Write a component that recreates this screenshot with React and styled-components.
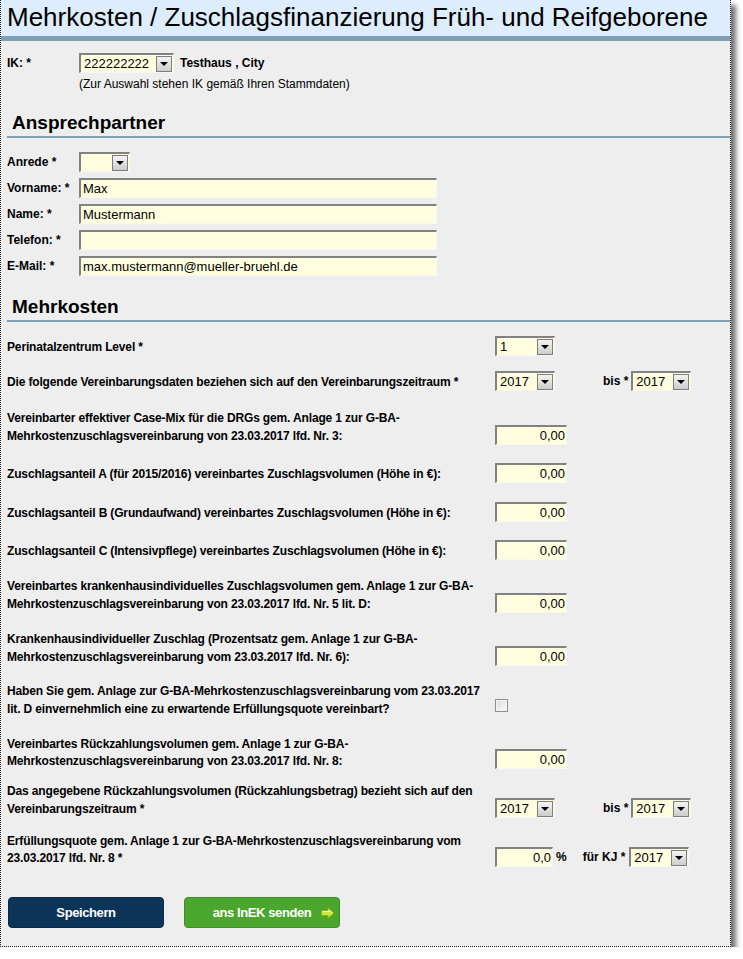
import React from 'react';
import styled, { createGlobalStyle } from 'styled-components';

const GlobalStyle = createGlobalStyle`
	body {
		margin: 0;
		background: #ffffff;
		font-family: "Liberation Sans", Arial, sans-serif;
		color: #000;
	}
`;

const Page = styled.div`
	width: 731px;
	min-height: 947px;
	box-sizing: border-box;
	background: #eeeeee;
	border-left: 1px dotted #222;
	border-right: 1px dotted #222;
	border-bottom: 1px dotted #222;
	box-shadow: 5px 5px 5px rgba(0, 0, 0, 0.55);
	padding-bottom: 18px;
`;

const TitleBar = styled.h1`
	margin: 0;
	height: 36px;
	box-sizing: content-box;
	background: #ddedfb;
	border-bottom: 5px solid #7f9fb4;
	padding-left: 6px;
	font-size: 26px;
	font-weight: normal;
	line-height: 35px;
	white-space: nowrap;
`;

const Content = styled.div`
	padding: 12px 0 0 6px;
`;

const FieldRow = styled.div`
	display: flex;
	align-items: center;
	min-height: 20px;
`;

const ShortLabel = styled.label`
	width: 72px;
	flex: none;
	font-size: 12px;
	font-weight: bold;
`;

const Hint = styled.div`
	margin: 4px 0 0 72px;
	font-size: 12px;
	line-height: 14px;
`;

const Strong = styled.span`
	font-size: 12px;
	font-weight: bold;
	margin-left: ${(p) => p.$ml || 0}px;
	margin-right: ${(p) => p.$mr || 0}px;
`;

const Heading = styled.h2`
	margin: ${(p) => p.$mt}px 0 ${(p) => p.$mb}px 0;
	padding: 0 0 2px 5px;
	font-size: 19px;
	font-weight: bold;
	line-height: 22px;
	border-bottom: 2px solid #7f9fb4;
`;

const SelectBox = styled.span`
	display: inline-flex;
	align-items: center;
	width: ${(p) => p.$w}px;
	height: 20px;
	box-sizing: border-box;
	flex: none;
	background: #ffffe0;
	border-top: 2px solid #828282;
	border-left: 2px solid #828282;
	border-right: 1px solid #f7f7f7;
	border-bottom: 1px solid #f7f7f7;
	font-size: 13px;
`;

const SelectValue = styled.span`
	flex: 1;
	padding-left: 3px;
	white-space: nowrap;
	overflow: hidden;
`;

const SelectArrow = styled.span`
	width: 16px;
	height: 16px;
	box-sizing: border-box;
	margin-right: 1px;
	background: linear-gradient(#f4f4f4, #cdcdcd);
	border: 1px solid #7d7d7d;
	display: flex;
	align-items: center;
	justify-content: center;

	&::after {
		content: '';
		border-left: 4px solid transparent;
		border-right: 4px solid transparent;
		border-top: 4px solid #000;
		margin-top: 1px;
	}
`;

const TextInput = styled.input`
	width: ${(p) => p.$w}px;
	height: 20px;
	box-sizing: border-box;
	flex: none;
	margin: 0;
	padding: 0 ${(p) => (p.$right ? 1 : 2)}px 0 2px;
	background: #ffffe0;
	border: none;
	border-top: 2px solid #828282;
	border-left: 2px solid #828282;
	border-right: 1px solid #f7f7f7;
	border-bottom: 1px solid #f7f7f7;
	font-family: "Liberation Sans", Arial, sans-serif;
	font-size: 13px;
	color: #000;
	text-align: ${(p) => (p.$right ? 'right' : 'left')};
	outline: none;
`;

const PersonGrid = styled.div`
	display: flex;
	flex-direction: column;
	gap: 6px;
`;

const CostList = styled.div`
	display: flex;
	flex-direction: column;
`;

const CostRow = styled.div`
	display: flex;
	align-items: flex-end;
	margin-top: ${(p) => p.$mt}px;
`;

const CostLabel = styled.div`
	width: 488px;
	flex: none;
	font-size: 12px;
	font-weight: bold;
	line-height: ${(p) => p.$lh || 18}px;
	letter-spacing: -0.15px;
`;

const CostValue = styled.div`
	display: flex;
	align-items: center;
	height: ${(p) => p.$h || 20}px;
	margin-bottom: ${(p) => p.$mb || 0}px;
`;

const Checkbox = styled.span`
	width: 13px;
	height: 13px;
	box-sizing: border-box;
	border: 1px solid #8e8f8f;
	background: linear-gradient(135deg, #dcdcdc, #fbfbfb);
	box-shadow: inset 0 0 0 1px #f4f4f4;
`;

const ButtonBar = styled.div`
	display: flex;
	gap: 20px;
	margin-top: 30px;
	padding-left: 1px;
`;

const Button = styled.button`
	width: 156px;
	height: 31px;
	box-sizing: border-box;
	border-radius: 4px;
	border: 1px solid ${(p) => (p.$green ? '#3f8f22' : '#0a2a48')};
	background: ${(p) => (p.$green ? '#4aa62c' : '#0c3458')};
	color: #fff;
	font-family: "Liberation Sans", Arial, sans-serif;
	font-size: 13px;
	font-weight: bold;
	letter-spacing: -0.4px;
	display: flex;
	align-items: center;
	justify-content: center;
	position: relative;
	cursor: pointer;
`;

const ButtonIcon = styled.svg`
	position: absolute;
	right: 4px;
	top: 9px;
`;

const Select = ({ w, value }) => (
	<SelectBox $w={w}>
		<SelectValue>{value}</SelectValue>
		<SelectArrow />
	</SelectBox>
);

const ArrowIcon = () => (
	<ButtonIcon width="14" height="12" viewBox="0 0 14 12">
		<path d="M0.5 3.5 H7 V0.8 L13 6 L7 11.2 V8.5 H0.5 Z" fill="#c8ea3c" stroke="#8fae1c" strokeWidth="1" />
		<path d="M1.5 4.5 H8 V3 L11 6" fill="none" stroke="#eaffa0" strokeWidth="1" />
	</ButtonIcon>
);

const App = () => {
	return (
		<>
			<GlobalStyle />
			<Page>
				<TitleBar>Mehrkosten / Zuschlagsfinanzierung Früh- und Reifgeborene</TitleBar>
				<Content>
					<FieldRow>
						<ShortLabel>IK: *</ShortLabel>
						<Select w={95} value="222222222" />
						<Strong $ml={6}>Testhaus , City</Strong>
					</FieldRow>
					<Hint>(Zur Auswahl stehen IK gemäß Ihren Stammdaten)</Hint>

					<Heading $mt={21} $mb={14}>Ansprechpartner</Heading>
					<PersonGrid>
						<FieldRow>
							<ShortLabel>Anrede *</ShortLabel>
							<Select w={51} value="" />
						</FieldRow>
						<FieldRow>
							<ShortLabel>Vorname: *</ShortLabel>
							<TextInput $w={358} defaultValue="Max" />
						</FieldRow>
						<FieldRow>
							<ShortLabel>Name: *</ShortLabel>
							<TextInput $w={358} defaultValue="Mustermann" />
						</FieldRow>
						<FieldRow>
							<ShortLabel>Telefon: *</ShortLabel>
							<TextInput $w={358} defaultValue="" />
						</FieldRow>
						<FieldRow>
							<ShortLabel>E-Mail: *</ShortLabel>
							<TextInput $w={358} defaultValue="max.mustermann@mueller-bruehl.de" />
						</FieldRow>
					</PersonGrid>

					<Heading $mt={20} $mb={0}>Mehrkosten</Heading>
					<CostList>
						<CostRow $mt={14}>
							<CostLabel>Perinatalzentrum Level *</CostLabel>
							<CostValue>
								<Select w={60} value="1" />
							</CostValue>
						</CostRow>
						<CostRow $mt={15}>
							<CostLabel>Die folgende Vereinbarungsdaten beziehen sich auf den Vereinbarungszeitraum *</CostLabel>
							<CostValue>
								<Select w={60} value="2017" />
								<Strong $ml={48} $mr={3}>bis *</Strong>
								<Select w={60} value="2017" />
							</CostValue>
						</CostRow>
						<CostRow $mt={18}>
							<CostLabel>
								Vereinbarter effektiver Case-Mix für die DRGs gem. Anlage 1 zur G-BA-
								<br />
								Mehrkostenzuschlagsvereinbarung von 23.03.2017 lfd. Nr. 3:
							</CostLabel>
							<CostValue>
								<TextInput $w={72} $right defaultValue="0,00" />
							</CostValue>
						</CostRow>
						<CostRow $mt={18}>
							<CostLabel>Zuschlagsanteil A (für 2015/2016) vereinbartes Zuschlagsvolumen (Höhe in €):</CostLabel>
							<CostValue>
								<TextInput $w={72} $right defaultValue="0,00" />
							</CostValue>
						</CostRow>
						<CostRow $mt={19}>
							<CostLabel>Zuschlagsanteil B (Grundaufwand) vereinbartes Zuschlagsvolumen (Höhe in €):</CostLabel>
							<CostValue>
								<TextInput $w={72} $right defaultValue="0,00" />
							</CostValue>
						</CostRow>
						<CostRow $mt={18}>
							<CostLabel>Zuschlagsanteil C (Intensivpflege) vereinbartes Zuschlagsvolumen (Höhe in €):</CostLabel>
							<CostValue>
								<TextInput $w={72} $right defaultValue="0,00" />
							</CostValue>
						</CostRow>
						<CostRow $mt={17}>
							<CostLabel>
								Vereinbartes krankenhausindividuelles Zuschlagsvolumen gem. Anlage 1 zur G-BA-
								<br />
								Mehrkostenzuschlagsvereinbarung von 23.03.2017 lfd. Nr. 5 lit. D:
							</CostLabel>
							<CostValue>
								<TextInput $w={72} $right defaultValue="0,00" />
							</CostValue>
						</CostRow>
						<CostRow $mt={17}>
							<CostLabel>
								Krankenhausindividueller Zuschlag (Prozentsatz gem. Anlage 1 zur G-BA-
								<br />
								Mehrkostenzuschlagsvereinbarung vom 23.03.2017 lfd. Nr. 6):
							</CostLabel>
							<CostValue>
								<TextInput $w={72} $right defaultValue="0,00" />
							</CostValue>
						</CostRow>
						<CostRow $mt={16}>
							<CostLabel>
								Haben Sie gem. Anlage zur G-BA-Mehrkostenzuschlagsvereinbarung vom 23.03.2017
								<br />
								lit. D einvernehmlich eine zu erwartende Erfüllungsquote vereinbart?
							</CostLabel>
							<CostValue $h={13} $mb={6}>
								<Checkbox />
							</CostValue>
						</CostRow>
						<CostRow $mt={18}>
							<CostLabel $lh={17}>
								Vereinbartes Rückzahlungsvolumen gem. Anlage 1 zur G-BA-
								<br />
								Mehrkostenzuschlagsvereinbarung von 23.03.2017 lfd. Nr. 8:
							</CostLabel>
							<CostValue $mb={1}>
								<TextInput $w={72} $right defaultValue="0,00" />
							</CostValue>
						</CostRow>
						<CostRow $mt={12}>
							<CostLabel>
								Das angegebene Rückzahlungsvolumen (Rückzahlungsbetrag) bezieht sich auf den
								<br />
								Vereinbarungszeitraum *
							</CostLabel>
							<CostValue>
								<Select w={60} value="2017" />
								<Strong $ml={48} $mr={3}>bis *</Strong>
								<Select w={60} value="2017" />
							</CostValue>
						</CostRow>
						<CostRow $mt={15}>
							<CostLabel $lh={17}>
								Erfüllungsquote gem. Anlage 1 zur G-BA-Mehrkostenzuschlagsvereinbarung vom
								<br />
								23.03.2017 lfd. Nr. 8 *
							</CostLabel>
							<CostValue>
								<TextInput $w={58} $right defaultValue="0,0" />
								<Strong $ml={3} $mr={16}>%</Strong>
								<Strong $mr={4}>für KJ *</Strong>
								<Select w={60} value="2017" />
							</CostValue>
						</CostRow>
					</CostList>

					<ButtonBar>
						<Button type="button">Speichern</Button>
						<Button type="button" $green>
							ans InEK senden
							<ArrowIcon />
						</Button>
					</ButtonBar>
				</Content>
			</Page>
		</>
	);
};

export default App;
